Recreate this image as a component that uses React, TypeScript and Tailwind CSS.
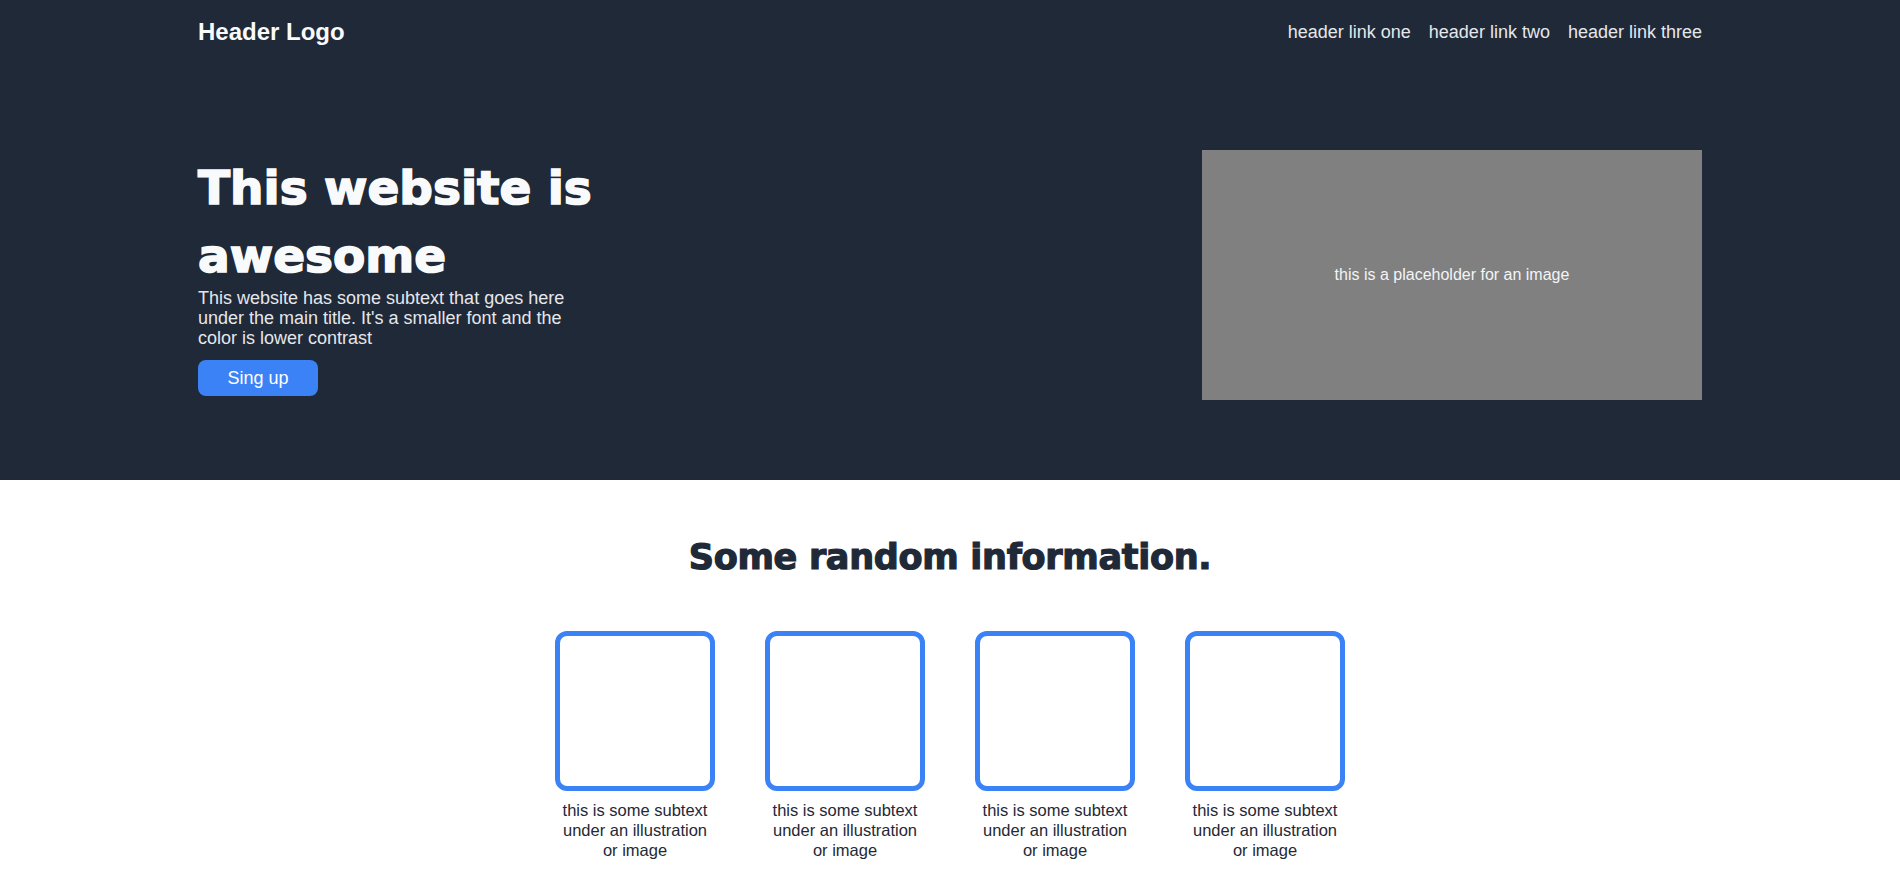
import React from "react"

const sans = "font-['Liberation_Sans',Arial,sans-serif]"
const heavy = "font-['DejaVu_Sans','Liberation_Sans',sans-serif]"

const cards = [1, 2, 3, 4]

export default function App() {
  return (
    <div className={`min-h-screen bg-white ${sans}`}>
      {/* dark top area */}
      <div className="bg-[#1f2937]">
        <div className="mx-auto max-w-[1504px]">
          <header className="flex items-center justify-between py-4">
            <div className="text-2xl font-bold leading-8 text-[#f9fafb]">Header Logo</div>
            <nav className="flex items-center gap-[18px] text-lg leading-7 text-[#e5e7eb]">
              <a href="#">header link one</a>
              <a href="#">header link two</a>
              <a href="#">header link three</a>
            </nav>
          </header>

          <section className="flex items-center justify-between pt-[86px] pb-[80px]">
            <div className="w-[405px]">
              <h1
                className={`${heavy} text-[47px] font-bold leading-[68px] text-[#f9fafb] [-webkit-text-stroke:1.6px_#f9fafb]`}
              >
                This website is awesome
              </h1>
              <p className="-mt-[2px] text-[18px] leading-[20px] text-[#e5e7eb]">
                This website has some subtext that goes here under the main title. It's a smaller font and the
                color is lower contrast
              </p>
              <button className="mt-[12px] h-9 w-[120px] rounded-lg bg-[#3b82f6] text-[18px] leading-[20px] text-white">
                Sing up
              </button>
            </div>
            <div className="flex h-[250px] w-[500px] items-center justify-center bg-[#808080] text-base text-[#f3f4f6]">
              this is a placeholder for an image
            </div>
          </section>
        </div>
      </div>

      {/* info section */}
      <section className="flex flex-col items-center">
        <h2
          className={`${heavy} mt-[57px] text-[35px] font-bold leading-[40px] tracking-[-0.3px] text-[#1f2937] [-webkit-text-stroke:1.2px_#1f2937]`}
        >
          Some random information.
        </h2>
        <div className="mt-[54px] flex gap-[50px]">
          {cards.map((c) => (
            <div key={c} className="flex w-[160px] flex-col items-center">
              <div className="h-[160px] w-[160px] rounded-xl border-[5px] border-[#3b82f6]" />
              <p className="mt-[9px] text-center text-[16.5px] leading-[20px] text-[#1f2937]">
                this is some subtext under an illustration or image
              </p>
            </div>
          ))}
        </div>
      </section>
    </div>
  )
}
